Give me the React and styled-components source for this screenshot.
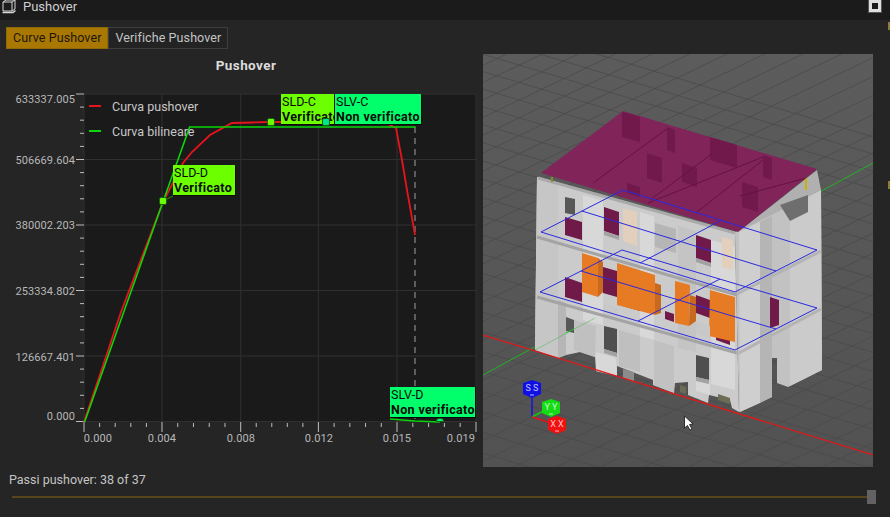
import styled, { createGlobalStyle } from "styled-components"

const GlobalStyle = createGlobalStyle`
  html, body {
    margin: 0;
    padding: 0;
    background: #252525;
    overflow: hidden;
  }
`

const Page = styled.div`
  width: 890px;
  height: 517px;
  display: flex;
  flex-direction: column;
  background: #252525;
  font-family: Roboto, "Liberation Sans", sans-serif;
  color: #d0d0d0;
`

const TitleBar = styled.div`
  height: 20px;
  box-sizing: border-box;
  display: flex;
  align-items: flex-start;
  gap: 6px;
  padding: 0 9px 0 2px;
  background: #1b1b1b;
  font-size: 13px;
  line-height: 13px;
  color: #cfcfcf;
`

const TitleText = styled.span`
  flex: 1;
`

const WindowButton = styled.div`
  width: 12px;
  height: 12px;
  box-sizing: border-box;
  border: 3px solid #dedede;
  background: #191919;
  outline: 1px solid #555;
`

const TabBar = styled.div`
  display: flex;
  padding: 7px 0 5px 6px;
`

const Tab = styled.div`
  height: 22px;
  box-sizing: border-box;
  padding: 0 6px;
  font-size: 12.5px;
  line-height: 20px;
  letter-spacing: 0.1px;
  border: 1px solid ${p => (p.$active ? "#8f6703" : "#3d3d3d")};
  background: ${p => (p.$active ? "#a97803" : "#232323")};
  color: ${p => (p.$active ? "#1d1606" : "#c4c4c4")};
`

const Panels = styled.div`
  display: flex;
  height: 413px;
`

const ChartPane = styled.div`
  position: relative;
  width: 483px;
  flex: none;
`

const ChartTitle = styled.div`
  height: 32px;
  text-align: center;
  font-size: 13.5px;
  font-weight: 700;
  line-height: 22px;
  letter-spacing: 0.4px;
  padding-left: 9px;
  color: #dcdcdc;
`

const ChartSvg = styled.svg`
  display: block;
  font-family: Roboto, "Liberation Sans", sans-serif;
`

const Legend = styled.div`
  position: absolute;
  left: 89px;
  top: 43px;
  display: flex;
  flex-direction: column;
  gap: 7px;
`

const LegendRow = styled.div`
  display: flex;
  align-items: center;
  gap: 11px;
  height: 18px;
  font-size: 12.5px;
  color: #c8c8c8;
`

const LegendSwatch = styled.span`
  width: 12px;
  height: 2px;
  background: ${p => p.$color};
`

const Callout = styled.div`
  position: absolute;
  left: ${p => p.$x}px;
  top: ${p => p.$y}px;
  width: ${p => p.$w}px;
  height: 31px;
  box-sizing: border-box;
  overflow: hidden;
  padding: 1px 0 0 1px;
  white-space: nowrap;
  background: ${p => p.$color};
  border: 1px solid #0b0b0b;
  border-width: 0 1px 1px 0;
  color: #0a0a0a;
  font-size: 12.5px;
  line-height: 14.5px;

  & > b {
    display: block;
    font-size: 12.5px;
    letter-spacing: 0.35px;
  }
`

const Marker = styled.span`
  position: absolute;
  left: ${p => p.$x - 4}px;
  top: ${p => p.$y - 4}px;
  width: 8px;
  height: ${p => (p.$clipped ? 4 : 8)}px;
  box-sizing: border-box;
  border-radius: ${p => (p.$clipped ? "3px 3px 0 0" : "2px")};
  background: ${p => p.$color};
  border: 1px solid #176018;
`

const ViewPane = styled.div`
  width: 390px;
  height: 413px;
  flex: none;
  background: linear-gradient(#5c5c5c, #525252);
`

const Footer = styled.div`
  position: relative;
  flex: 1;
  padding: 5px 0 0 9px;
  font-size: 12.5px;
  line-height: 16px;
  color: #c4c4c4;
`

const SliderRow = styled.div`
  display: flex;
  align-items: center;
  height: 14px;
  margin: 2px 14px 0 3px;
`

const SliderTrack = styled.div`
  flex: 1;
  height: 2px;
  background: #57461c;
`

const SliderThumb = styled.div`
  width: 9px;
  height: 14px;
  background: #626262;
`

const EdgeMark = styled.span`
  position: absolute;
  right: 0;
  top: ${p => p.$y}px;
  width: 2px;
  height: 8px;
  background: #8f7a3a;
`

const yTicks = [
  [94, "633337.005", 103],
  [159.5, "506669.604", 164],
  [225, "380002.203", 229],
  [290.5, "253334.802", 295],
  [356, "126667.401", 361],
  [421.5, "0.000", 420],
]
const xTicks = [
  [84, "0.000", 98],
  [162, "0.004", 162],
  [240.7, "0.008", 241],
  [318.4, "0.012", 319],
  [397, "0.015", 397],
  [476, "0.019", 461],
]

const pushoverCurve = "84,422 121,312 163,202 183,163 192,152 210,135 232,123 253,122.5 271,122 326,122 388,124 396,128 402,160 407,190 415,235"
const bilinearCurve = "84,422 189,127 415,127"

function PushoverChart() {
  const minorX = []
  const minorY = []
  for (let i = 0; i < 5; i++) {
    for (let j = 1; j < 5; j++) {
      minorX.push(xTicks[i][0] + (j * (xTicks[i + 1][0] - xTicks[i][0])) / 5)
      minorY.push(yTicks[i][0] + (j * (yTicks[i + 1][0] - yTicks[i][0])) / 5)
    }
  }
  return (
    <ChartSvg width="483" height="381" viewBox="0 86 483 381">
      <rect x="84" y="94" width="392" height="328" fill="#1a1a1a" />
      {xTicks.map(([x]) => (
        <line key={x} x1={x} x2={x} y1="94" y2="422" stroke="#303030" />
      ))}
      {yTicks.map(([y]) => (
        <line key={y} x1="84" x2="476" y1={y} y2={y} stroke="#303030" />
      ))}
      {xTicks.map(([x, label, tx]) => (
        <g key={label + x}>
          <line x1={x} x2={x} y1="422" y2="432" stroke="#bdbdbd" />
          <text x={tx} y="442" textAnchor="middle" fontSize="11" letterSpacing="0.15" fill="#b8b8b8">{label}</text>
        </g>
      ))}
      {minorX.map(x => <line key={x} x1={x} x2={x} y1="423" y2="427" stroke="#bdbdbd" />)}
      {yTicks.map(([y, label, ty]) => (
        <g key={label}>
          <line x1="76" x2="84" y1={y} y2={y} stroke="#bdbdbd" />
          <text x="75" y={ty} textAnchor="end" fontSize="11" letterSpacing="0.1" fill="#b8b8b8">{label}</text>
        </g>
      ))}
      {minorY.map(y => <line key={y} x1="80" x2="84" y1={y} y2={y} stroke="#bdbdbd" />)}
      <line x1="415" x2="415" y1="127" y2="422" stroke="#8a8a8a" strokeWidth="1.2" strokeDasharray="6 5" />
      <polyline points={pushoverCurve} fill="none" stroke="#e8141c" strokeWidth="1.8" />
      <polyline points={bilinearCurve} fill="none" stroke="#0ad60a" strokeWidth="1.6" transform="translate(0.6 0)" />
      <polyline points="390,419 415,421 440,422" fill="none" stroke="#0ad60a" strokeWidth="1.5" />
      <line x1="163" y1="201" x2="173" y2="196" stroke="#2f8f10" />
    </ChartSvg>
  )
}

const SHADE = { wall: "#cbcbcb", lit: "#d8d8d8", side: "#b6b6b6", hole: "#575757", plum: "#701a4a", peach: "#e2cfbc", orange: "#e67b24", orangeSide: "#c76a20" }

// facade pieces, in screenshot coordinates
const facade = [
  // front wall, with the pillars standing on the red axis
  [SHADE.wall, "537,177 735,232 739,412 732,408 730,400 709,395 708,403 688,395 688,382 675,383 674,393 653,385 653,380 617,366 617,376 596,371 595,357 580,352 566,355 558,358 535,350"],
  ["#c6c6c6", "537,177 558,183 558,358 535,350"],
  [SHADE.side, "558,300 566,303 566,355 558,358"],
  ["#c0c0c0", "574,320 596,326 595,357 580,352 574,350"],
  [SHADE.lit, "596,352 616,358 617,376 596,371"],
  [SHADE.lit, "583,195 603,201 603,325 583,320"],
  [SHADE.lit, "640,212 654,216 654,340 640,336"],
  ["#bfbfbf", "619,330 640,336 640,372 619,366"],
  ["#c1c1c1", "654,340 674,346 674,393 654,385"],
  ["#c4c4c4", "678,226 696,231 696,352 678,348"],
  [SHADE.lit, "711,240 735,247 735,390 711,384"],
  [SHADE.lit, "696,376 710,380 710,395 696,391"],
  // right wall, with the gap in the ground floor
  ["#c2c2c2", "735,232 821,190 822,370 788,387 777,383 777,358 772,358 772,397 739,412"],
  ["#cfcfcf", "739,232 760,222 760,403 740,412"],
  ["#b5b5b5", "760,222 772,216 772,397 760,403"],
  ["#cbcbcb", "790,206 821,190 822,370 790,386"],
  // openings
  [SHADE.hole, "565,197 575,199 575,215 565,213"],
  [SHADE.plum, "604,207 619,212 619,236 604,231"],
  [SHADE.peach, "623,208 637,212 637,246 623,241"],
  [SHADE.plum, "565,217 582,222 582,240 565,235"],
  ["#b6b6b6", "655,223 676,229 676,253 655,247"],
  [SHADE.plum, "696,235 711,240 711,263 696,258"],
  [SHADE.peach, "722,237 733,240 733,270 722,267"],
  [SHADE.plum, "565,277 582,283 582,302 565,297"],
  [SHADE.plum, "603,267 617,271 617,297 603,293"],
  [SHADE.plum, "696,295 710,300 710,318 696,313"],
  [SHADE.plum, "770,297 779,300 779,325 770,328"],
  [SHADE.plum, "623,298 640,303 640,311 623,306"],
  [SHADE.plum, "665,311 674,314 674,322 665,319"],
  [SHADE.plum, "716,335 730,340 730,345 716,340"],
  ["#4f4f4f", "604,326 617,329 617,353 604,349"],
  ["#4f4f4f", "696,355 709,358 709,380 696,377"],
  [SHADE.hole, "566,317 574,320 574,333 566,331"],
  ["#8c8c8c", "623,369 634,372 634,382 623,378"],
  ["#6d6d55", "680,385 686,387 686,394 680,392"],
  ["#6d6d55", "718,394 730,398 730,404 718,400"],
  ["#a2a2a2", "604,231 619,236 619,240 604,235"],
  ["#a2a2a2", "696,258 711,263 711,267 696,262"],
  ["#a2a2a2", "604,349 617,353 617,357 604,353"],
  ["#a2a2a2", "696,377 709,380 709,384 696,381"],
  [SHADE.orange, "582,253 598,258 598,297 582,292"],
  [SHADE.orangeSide, "598,258 603,262 603,292 598,297"],
  [SHADE.orange, "617,263 655,275 655,315 617,305"],
  [SHADE.orangeSide, "655,283 661,285 661,313 655,315"],
  [SHADE.orange, "675,281 690,285 689,326 675,323"],
  [SHADE.orangeSide, "690,295 696,297 696,321 689,326"],
  [SHADE.orange, "710,290 735,297 735,342 709,336"],
  ["#c8c8c8", "603,303 617,308 617,320 603,316"],
  ["#c8c8c8", "696,321 710,326 710,338 696,333"],
]

const ledges = [
  ["#a4a4a4", "537,237 737,295"],
  ["#a4a4a4", "537,297 737,353"],
  ["#aaaaaa", "538,178 735,233"],
  ["#b4b4b4", "737,294 821,251"],
  ["#b4b4b4", "737,354 821,309"],
]
const floors = [
  "541,232 623,190 817,250 735,292",
  "540,292 622,250 817,308 735,350",
]
const floorCross = ["722,220 640,263", "582,211 776,271", "720,279 638,321", "581,271 776,329"]
const roofShadows = [
  "622,112 640,117 640,142 622,137",
  "647,153 662,158 662,183 647,178",
  "667,127 675,130 675,153 667,150",
  "682,163 697,168 697,187 682,182",
  "710,137 737,145 737,168 710,160",
  "742,182 758,187 758,212 742,207",
  "763,155 772,158 772,180 763,177",
  "627,183 640,187 640,197 627,193",
]
const roofLines = ["593,183 668,128", "650,200 713,153", "648,203 763,157", "697,212 763,160", "740,196 806,178"]

// ground grid, the rows widen a little towards the viewer
function groundLines() {
  const lines = []
  for (let i = 0; i < 38; i++) {
    const c = -125 + 17 * i + 0.08 * i * i
    lines.push([483, 0.3 * 483 + c, 873, 0.3 * 873 + c])
  }
  for (let i = 0; i < 42; i++) {
    const c = 280 + 17 * i + 0.08 * i * i
    lines.push([483, c - 0.48 * 483, 873, c - 0.48 * 873])
  }
  return lines
}

function GizmoCube({ x, y, color, letter }) {
  return (
    <g>
      <polygon points={`${x},${y - 9} ${x + 9},${y - 6} ${x + 9},${y + 5} ${x},${y + 9} ${x - 9},${y + 5} ${x - 9},${y - 6}`} fill={color} />
      <text x={x} y={y + 2} textAnchor="middle" fontSize="9" fill="#fff" fillOpacity="0.75" fontFamily="Roboto, sans-serif">{letter} {letter}</text>
      <line x1={x - 2} x2={x + 2} y1={y + 6} y2={y + 6} stroke="#fff" strokeOpacity="0.7" />
    </g>
  )
}

function BuildingView() {
  return (
    <svg width="390" height="413" viewBox="483 54 390 413" style={{ display: "block" }}>
      {groundLines().map((l, i) => (
        <line key={i} x1={l[0]} y1={l[1]} x2={l[2]} y2={l[3]} stroke="#494949" strokeOpacity="0.75" />
      ))}
      <line x1="483" y1="375" x2="873" y2="163" stroke="#25b225" />
      {facade.map(([fill, points]) => <polygon key={points} points={points} fill={fill} />)}
      <line x1="535" y1="350" x2="595" y2="318" stroke="#25b225" strokeOpacity="0.4" />
      <line x1="566" y1="333" x2="574" y2="329" stroke="#25c025" />
      <line x1="483" y1="335" x2="873" y2="455" stroke="#e01818" strokeWidth="1.3" />
      <polygon points="738,232 817,170 821,190" fill="#b0b0b0" />
      <polygon points="780,205 808,195 808,212 790,221" fill="#6e6e6e" />
      {ledges.map(([color, points]) => <polyline key={points} points={points} fill="none" stroke={color} strokeWidth="3" />)}
      <polyline points="806,178 806,190" stroke="#c8b400" strokeWidth="2" />
      <polyline points="552,177 552,182" stroke="#8a8a2a" strokeWidth="2" />
      <polygon points="623,111 817,169 738,232 541,173" fill="#80245a" />
      {roofShadows.map(points => <polygon key={points} points={points} fill="#71194b" />)}
      {roofLines.map(points => <polyline key={points} points={points} fill="none" stroke="#661241" />)}
      {floors.map(points => <polygon key={points} points={points} fill="none" stroke="#2a2adf" strokeWidth="1" />)}
      {floorCross.map(points => <polyline key={points} points={points} fill="none" stroke="#2a2adf" />)}
      <line x1="532" y1="397" x2="532" y2="417" stroke="#1414e0" strokeWidth="1.5" />
      <line x1="532" y1="417" x2="551" y2="407" stroke="#14c814" strokeWidth="1.5" />
      <line x1="532" y1="417" x2="557" y2="425" stroke="#e01414" strokeWidth="1.5" />
      <GizmoCube x={532} y={389} color="#1010e6" letter="S" />
      <GizmoCube x={551} y={408} color="#14dc14" letter="Y" />
      <GizmoCube x={557} y={425} color="#f01010" letter="X" />
      <polygon points="684.5,416 684.5,428 687.5,425.5 690,430 692,429 689.5,424.5 693,424" fill="#fff" stroke="#111" strokeWidth="0.8" />
    </svg>
  )
}

function WindowIcon() {
  return (
    <svg width="15" height="14" viewBox="0 0 15 14" fill="none" stroke="#d8d8d8" strokeWidth="1">
      <path d="M1 2 L4 0 H13 V9 L10 11 H1 Z" />
      <path d="M1 2 H10 V11 M10 2 L13 0" />
      <path d="M0.5 12.5 H11 L13.5 10.5" strokeWidth="1.4" />
    </svg>
  )
}

export default function App() {
  return (
    <Page>
      <GlobalStyle />
      <TitleBar>
        <WindowIcon />
        <TitleText>Pushover</TitleText>
        <WindowButton />
      </TitleBar>
      <TabBar>
        <Tab $active>Curve Pushover</Tab>
        <Tab>Verifiche Pushover</Tab>
      </TabBar>
      <Panels>
        <ChartPane>
          <ChartTitle>Pushover</ChartTitle>
          <PushoverChart />
          <Legend>
            <LegendRow><LegendSwatch $color="#e8141c" />Curva pushover</LegendRow>
            <LegendRow><LegendSwatch $color="#0ad60a" />Curva bilineare</LegendRow>
          </Legend>
          <Marker $x={163} $y={147} $color="#6cff00" />
          <Marker $x={271} $y={68} $color="#6cff00" />
          <Callout $x={173} $y={111} $w={63} $color="#6cff00">SLD-D<b>Verificato</b></Callout>
          <Callout $x={281} $y={40} $w={54} $color="#6cff00">SLD-C<b>Verificato</b></Callout>
          <Callout $x={335} $y={40} $w={87} $color="#00ff6a">SLV-C<b>Non verificato</b></Callout>
          <Callout $x={390} $y={333} $w={86} $color="#00ff6a">SLV-D<b>Non verificato</b></Callout>
          <Marker $x={326} $y={68} $color="#00e58c" />
          <Marker $x={440} $y={368} $clipped $color="#00ff6a" />
        </ChartPane>
        <ViewPane>
          <BuildingView />
        </ViewPane>
      </Panels>
      <Footer>
        Passi pushover: 38 of 37
        <SliderRow>
          <SliderTrack />
          <SliderThumb />
        </SliderRow>
        <EdgeMark $y={-445} />
        <EdgeMark $y={-286} />
      </Footer>
    </Page>
  )
}
